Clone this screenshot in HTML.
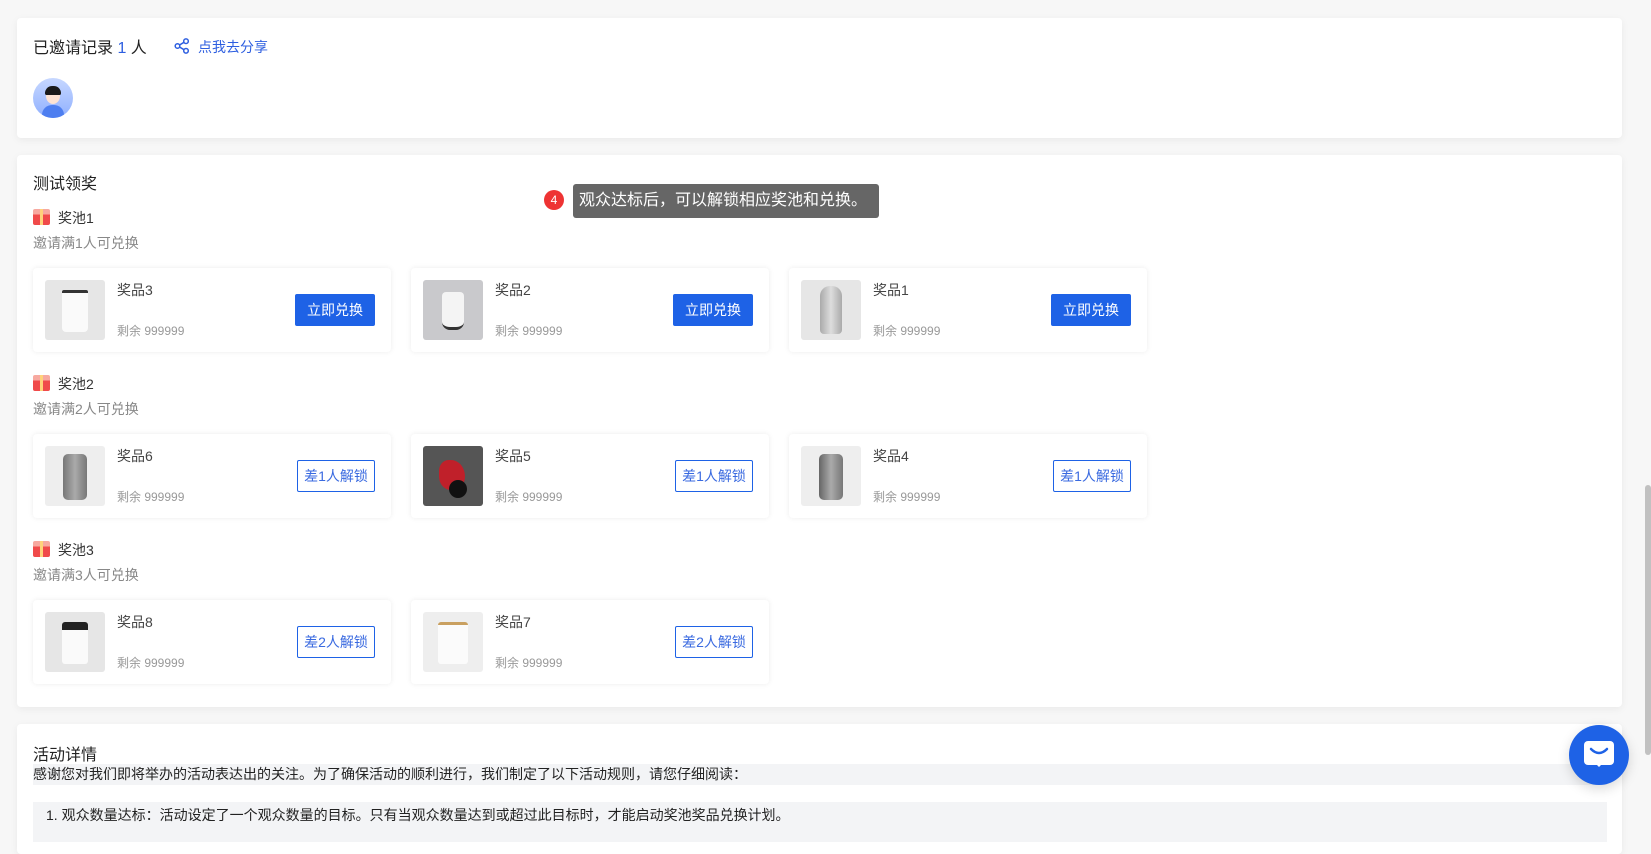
<!DOCTYPE html>
<html><head><meta charset="utf-8"><style>
*{margin:0;padding:0;box-sizing:border-box}
body{width:1651px;height:838px;overflow:hidden;background:#f7f7f7;font-family:"Liberation Sans","Noto Sans CJK SC",sans-serif;position:relative;color:#333}
.card{position:absolute;left:17px;width:1605px;background:#fff;border-radius:4px;box-shadow:0 2px 8px rgba(0,0,0,.06)}
.abs{position:absolute}
.pc{position:absolute;width:358px;height:84px;background:#fff;border-radius:4px;box-shadow:0 0 6px rgba(0,0,0,.08)}
.pc .img{position:absolute;left:12px;top:12px;width:60px;height:60px;border-radius:3px;background:#e6e6e6;overflow:hidden}
.pc .nm{position:absolute;left:84px;top:12px;font-size:14px;color:#444}
.pc .rm{position:absolute;left:84px;top:54px;font-size:12px;color:#999}
.pc .btn{position:absolute;left:262px;top:26px;width:80px;height:32px;border-radius:2px;font-size:14px;line-height:32px;text-align:center}
.b1{background:#1e62e6;color:#fff}
.b2{border:1px solid #1e62e6;color:#3a6ae0;line-height:30px!important;left:264px!important;width:78px!important}
.pool{position:absolute;left:33px;font-size:14px;color:#333}
.sub{position:absolute;left:33px;font-size:14px;color:#888}
.gift{display:inline-block;width:17px;height:16px;vertical-align:-2px;margin-right:8px;background:linear-gradient(#f7a9a0 0 35%,#f04a4a 35%);border-radius:2px;position:relative}
.gift:after{content:"";position:absolute;left:7px;top:0;width:3px;height:16px;background:#ffd27a}
</style></head><body>

<div class="card" style="top:18px;height:120px">
  <div class="abs" style="left:16px;top:16px;font-size:16px;color:#222">已邀请记录 <span style="color:#2e5fe0">1</span> 人</div>
  <svg class="abs" style="left:157px;top:20px" width="16" height="16" viewBox="0 0 16 16" fill="none" stroke="#2e5fe0" stroke-width="1.5"><circle cx="3.5" cy="8" r="2.3"/><circle cx="12" cy="3.2" r="2.3"/><circle cx="12" cy="12.8" r="2.3"/><path d="M5.5 7 10 4.3M5.5 9 10 11.7"/></svg>
  <div class="abs" style="left:181px;top:19px;font-size:14px;color:#2e5fe0">点我去分享</div>
  <div class="abs" style="left:16px;top:60px;width:40px;height:40px;border-radius:50%;background:linear-gradient(#c7d8ff,#8fb0ff);overflow:hidden">
    <div class="abs" style="left:9px;top:27px;width:22px;height:16px;border-radius:10px 10px 0 0;background:#4d7ef0"></div>
    <div class="abs" style="left:13px;top:10px;width:14px;height:16px;border-radius:50%;background:#fde3d3"></div>
    <div class="abs" style="left:12px;top:8px;width:16px;height:9px;border-radius:8px 8px 2px 2px;background:#1a1a1a"></div>
  </div>
</div>

<div class="card" style="top:155px;height:552px"></div>
<div class="abs" style="left:33px;top:170px;font-size:16px;color:#222">测试领奖</div>

<div class="abs" style="left:544px;top:190px;width:20px;height:20px;border-radius:50%;background:#ee3333;color:#fff;font-size:12px;text-align:center;line-height:20px">4</div>
<div class="abs" style="left:568px;top:196px;width:0;height:0;border:5px solid transparent;border-right-color:#666"></div>
<div class="abs" style="left:573px;top:184px;width:306px;height:34px;background:#666;border-radius:3px;color:#fff;font-size:16px;line-height:34px;padding-left:6px">观众达标后，可以解锁相应奖池和兑换。</div>

<div class="pool" style="top:208px"><span class="gift"></span>奖池1</div>
<div class="sub" style="top:233px">邀请满1人可兑换</div>
<div class="pool" style="top:374px"><span class="gift"></span>奖池2</div>
<div class="sub" style="top:399px">邀请满2人可兑换</div>
<div class="pool" style="top:540px"><span class="gift"></span>奖池3</div>
<div class="sub" style="top:565px">邀请满3人可兑换</div>

<!-- row1 -->
<div class="pc" style="left:33px;top:268px"><div class="img"><div class="abs" style="left:17px;top:10px;width:26px;height:42px;background:#fafafa;border-top:3px solid #333;border-radius:2px 2px 4px 4px"></div></div><div class="nm">奖品3</div><div class="rm">剩余 999999</div><div class="btn b1">立即兑换</div></div>
<div class="pc" style="left:411px;top:268px"><div class="img" style="background:#c9c9cc"><div class="abs" style="left:19px;top:12px;width:22px;height:38px;background:#f4f4f4;border-radius:4px 4px 8px 8px;border-bottom:3px solid #333"></div></div><div class="nm">奖品2</div><div class="rm">剩余 999999</div><div class="btn b1">立即兑换</div></div>
<div class="pc" style="left:789px;top:268px"><div class="img"><div class="abs" style="left:19px;top:6px;width:22px;height:48px;background:linear-gradient(90deg,#aaa,#ddd,#aaa);border-radius:10px 10px 4px 4px"></div></div><div class="nm">奖品1</div><div class="rm">剩余 999999</div><div class="btn b1">立即兑换</div></div>
<!-- row2 -->
<div class="pc" style="left:33px;top:434px"><div class="img" style="background:#eee"><div class="abs" style="left:18px;top:8px;width:24px;height:46px;background:linear-gradient(90deg,#777,#aaa,#777);border-radius:5px"></div></div><div class="nm">奖品6</div><div class="rm">剩余 999999</div><div class="btn b2">差1人解锁</div></div>
<div class="pc" style="left:411px;top:434px"><div class="img" style="background:#555"><div class="abs" style="left:16px;top:14px;width:26px;height:30px;background:#c0202a;border-radius:40% 60% 50% 50%"></div><div class="abs" style="left:26px;top:34px;width:18px;height:18px;background:#111;border-radius:50%"></div></div><div class="nm">奖品5</div><div class="rm">剩余 999999</div><div class="btn b2">差1人解锁</div></div>
<div class="pc" style="left:789px;top:434px"><div class="img" style="background:#eee"><div class="abs" style="left:18px;top:8px;width:24px;height:46px;background:linear-gradient(90deg,#666,#aaa,#777);border-radius:5px"></div></div><div class="nm">奖品4</div><div class="rm">剩余 999999</div><div class="btn b2">差1人解锁</div></div>
<!-- row3 -->
<div class="pc" style="left:33px;top:600px"><div class="img"><div class="abs" style="left:17px;top:10px;width:26px;height:42px;background:#fafafa;border-top:8px solid #222;border-radius:3px"></div></div><div class="nm">奖品8</div><div class="rm">剩余 999999</div><div class="btn b2">差2人解锁</div></div>
<div class="pc" style="left:411px;top:600px"><div class="img" style="background:#eee"><div class="abs" style="left:15px;top:10px;width:30px;height:42px;background:#fbfbfb;border-top:3px solid #c9a060;border-radius:3px"></div></div><div class="nm">奖品7</div><div class="rm">剩余 999999</div><div class="btn b2">差2人解锁</div></div>

<div class="card" style="top:724px;height:130px"></div>
<div class="abs" style="left:33px;top:741px;font-size:16px;color:#222">活动详情</div>
<div class="abs" style="left:33px;top:764px;width:1574px;height:21px;background:#f3f4f6;font-size:14px;line-height:21px;color:#222">感谢您对我们即将举办的活动表达出的关注。为了确保活动的顺利进行，我们制定了以下活动规则，请您仔细阅读：</div>
<div class="abs" style="left:33px;top:802px;width:1574px;height:40px;background:#f3f4f6;font-size:14px;color:#222;padding:3px 0 0 13px">1. 观众数量达标：活动设定了一个观众数量的目标。只有当观众数量达到或超过此目标时，才能启动奖池奖品兑换计划。</div>

<div class="abs" style="left:1569px;top:725px;width:60px;height:60px;border-radius:50%;background:#1e62e6;box-shadow:0 4px 12px rgba(0,0,0,.15)">
  <div class="abs" style="left:15px;top:16px;width:30px;height:24px;background:#fff;border-radius:4px"></div>
  <div class="abs" style="left:26px;top:38px;border:4px solid transparent;border-top-color:#fff"></div>
  <svg class="abs" style="left:20px;top:22px" width="20" height="10"><path d="M2 2 Q10 10 18 2" stroke="#1e62e6" stroke-width="2.5" fill="none" stroke-linecap="round"/></svg>
</div>
<div class="abs" style="left:1645px;top:485px;width:6px;height:270px;background:#c1c1c1;border-radius:3px"></div>
</body></html>
